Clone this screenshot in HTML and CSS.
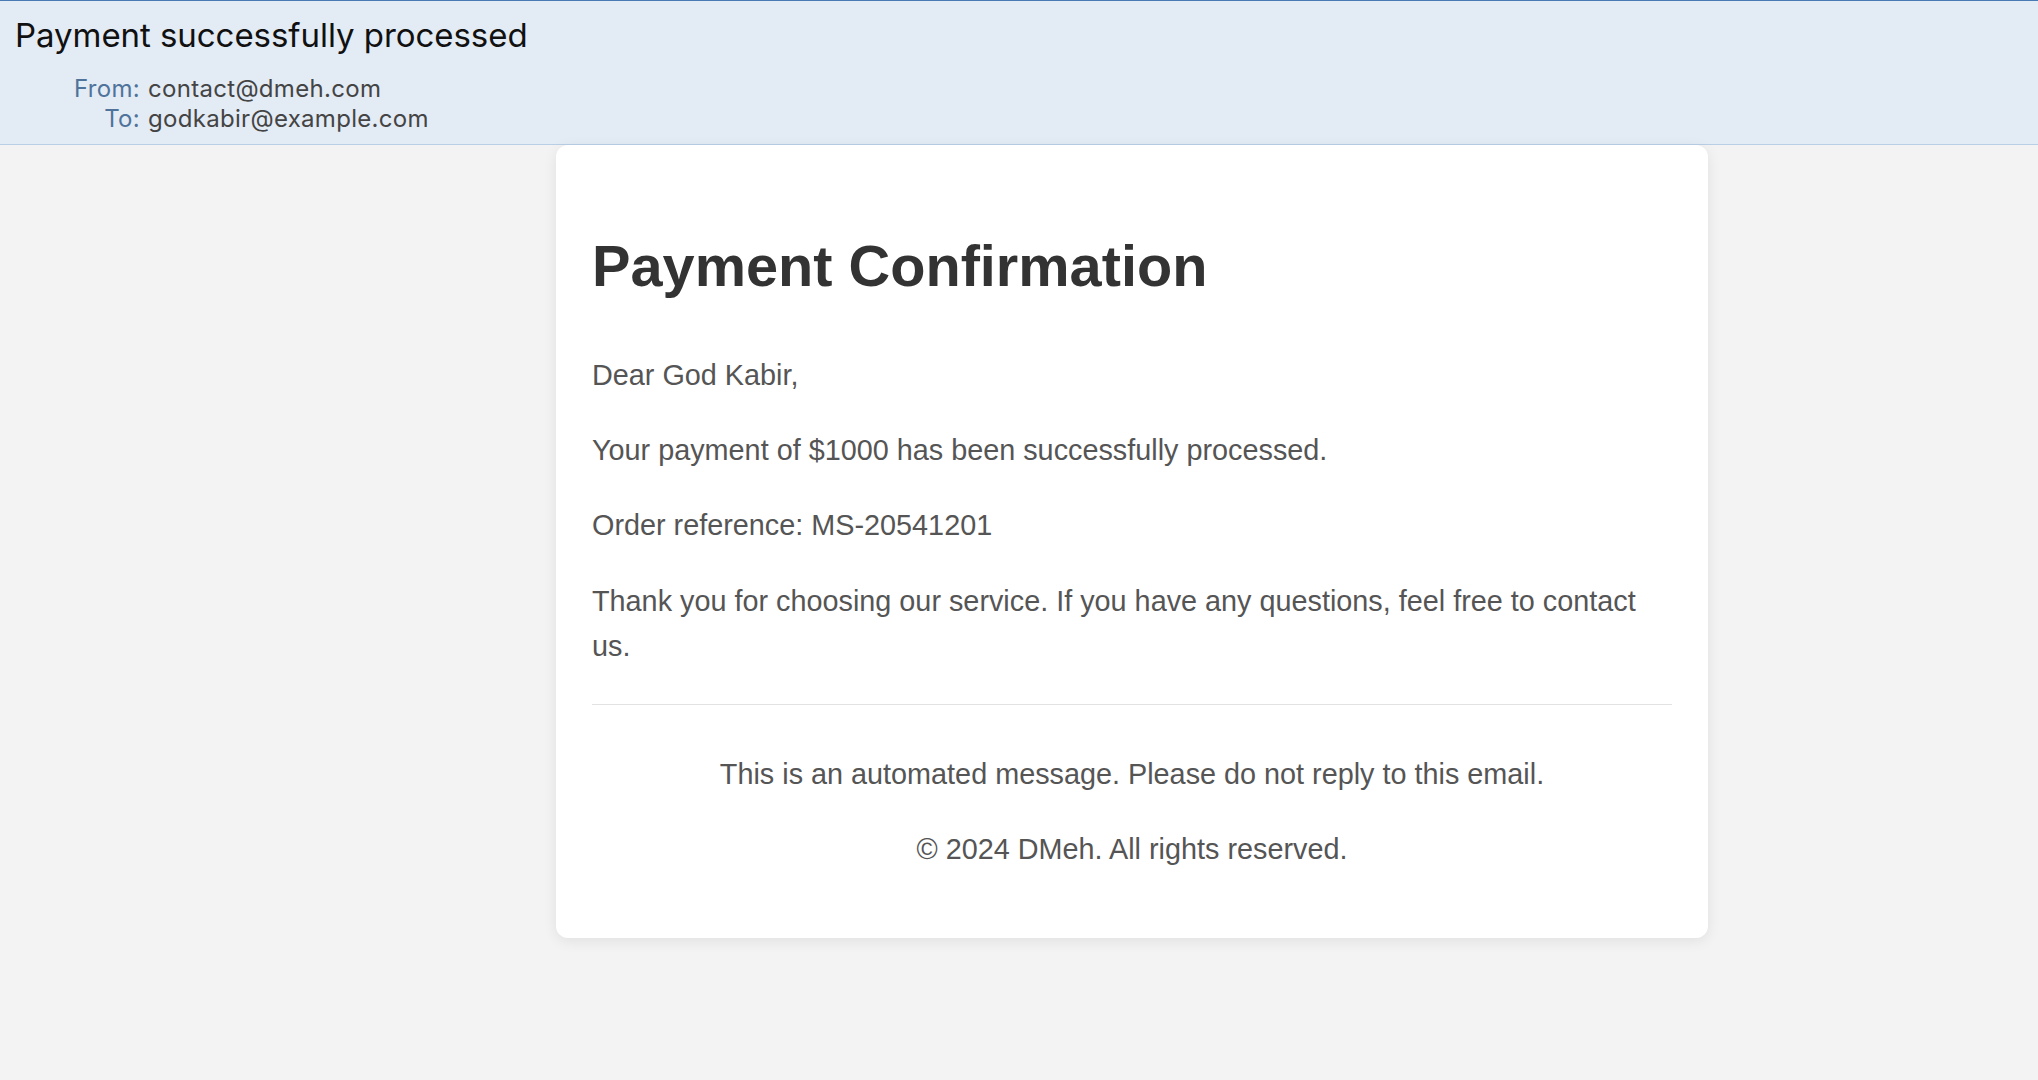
FILE: index.html
```html
<!DOCTYPE html>
<html lang="en">
<head>
<meta charset="utf-8">
<title>Payment successfully processed</title>
<link rel="stylesheet" href="styles.css">
</head>
<body>
<header class="mail-header">
  <h2 class="subject">Payment successfully processed</h2>
  <div class="meta">
    <span class="label">From:</span><span class="value">contact@dmeh.com</span>
    <span class="label">To:</span><span class="value">godkabir@example.com</span>
  </div>
</header>
<main class="mail-body">
  <section class="card">
    <h1 class="title">Payment Confirmation</h1>
    <div class="content">
      <p>Dear God Kabir,</p>
      <p>Your payment of $1000 has been successfully processed.</p>
      <p>Order reference: MS-20541201</p>
      <p>Thank you for choosing our service. If you have any questions, feel free to contact us.</p>
    </div>
    <div class="footer">
      <p>This is an automated message. Please do not reply to this email.</p>
      <p>&copy; 2024 DMeh. All rights reserved.</p>
    </div>
  </section>
</main>
</body>
</html>
```

FILE: styles.css
```css
html, body {
  margin: 0;
  padding: 0;
}
body {
  background: #f3f3f3;
  min-height: 1080px;
  font-family: "Liberation Sans", Arial, sans-serif;
}
.mail-header {
  background: #e3ebf5;
  border-top: 1px solid #4a7ab2;
  border-bottom: 1px solid #b9cfe6;
  height: 143px;
  box-sizing: content-box;
  font-family: Inter, "Noto Sans", sans-serif;
}
.subject {
  margin: 0;
  padding: 14px 0 0 15px;
  font-size: 33px;
  font-weight: 400;
  line-height: 40px;
  color: #111;
  letter-spacing: -0.05px;
}
.meta {
  display: grid;
  grid-template-columns: 140px auto;
  column-gap: 8px;
  margin-top: 19px;
  font-size: 24px;
  line-height: 30px;
  letter-spacing: 0.3px;
}
.label {
  text-align: right;
  color: #4f739a;
}
.value {
  color: #444;
}
.mail-body {
  padding-left: 556px;
}
.card {
  width: 1152px;
  box-sizing: border-box;
  background: #fff;
  border-radius: 12px;
  box-shadow: 0 3px 14px rgba(0, 0, 0, 0.08);
  padding: 36px 36px 36px;
  display: flow-root;
}
.title {
  margin: 51.5px 0 54px;
  font-size: 57.7px;
  font-weight: 700;
  line-height: 66px;
  color: #333;
}
.content p,
.footer p {
  margin: 0 0 30.4px;
  font-size: 28.8px;
  line-height: 45px;
  color: #555;
}
.content {
  padding-bottom: 4.5px;
}
.footer {
  border-top: 1px solid #e2e2e2;
  padding-top: 47px;
  text-align: center;
}
```
